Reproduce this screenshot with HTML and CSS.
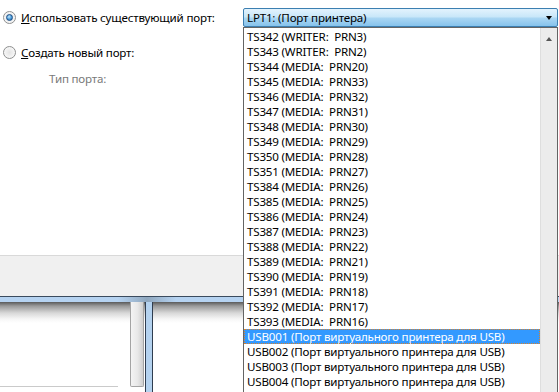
FILE: index.html
```html
<!DOCTYPE html>
<html lang="ru">
<head>
  <meta charset="utf-8"/>
  <link rel="stylesheet" href="styles.css">
  <title>Порт принтера</title>
</head>
<body>
  <div class="screen">
    <div class="dialog">
      <div class="port-row">
        <label class="radio-option">
          <span class="radio checked"></span>
          <span><u>И</u>спользовать существующий порт:</span>
        </label>
        <div class="combo">
          <span class="combo-text">LPT1: (Порт принтера)</span>
          <span class="combo-arrow"></span>
        </div>
      </div>
      <div class="port-row second">
        <label class="radio-option">
          <span class="radio"></span>
          <span><u>С</u>оздать новый порт:</span>
        </label>
      </div>
      <div class="port-type">Тип порта:</div>
    </div>

    <div class="button-bar"></div>

    <!-- window behind the dialog -->
    <div class="backdrop">
      <div class="backdrop-frame"></div>
      <div class="backdrop-body">
        <div class="nav-pane"><div class="nav-list"></div></div>
        <div class="nav-scroll"></div>
        <div class="splitter"></div>
        <div class="content-pane"></div>
      </div>
    </div>

    <!-- open combo list, drawn over everything -->
    <div class="dropdown">
      <ul class="port-list">
        <li>TS342 (WRITER:  PRN3)</li>
        <li>TS343 (WRITER:  PRN2)</li>
        <li>TS344 (MEDIA:  PRN20)</li>
        <li>TS345 (MEDIA:  PRN33)</li>
        <li>TS346 (MEDIA:  PRN32)</li>
        <li>TS347 (MEDIA:  PRN31)</li>
        <li>TS348 (MEDIA:  PRN30)</li>
        <li>TS349 (MEDIA:  PRN29)</li>
        <li>TS350 (MEDIA:  PRN28)</li>
        <li>TS351 (MEDIA:  PRN27)</li>
        <li>TS384 (MEDIA:  PRN26)</li>
        <li>TS385 (MEDIA:  PRN25)</li>
        <li>TS386 (MEDIA:  PRN24)</li>
        <li>TS387 (MEDIA:  PRN23)</li>
        <li>TS388 (MEDIA:  PRN22)</li>
        <li>TS389 (MEDIA:  PRN21)</li>
        <li>TS390 (MEDIA:  PRN19)</li>
        <li>TS391 (MEDIA:  PRN18)</li>
        <li>TS392 (MEDIA:  PRN17)</li>
        <li>TS393 (MEDIA:  PRN16)</li>
        <li class="selected">USB001 (Порт виртуального принтера для USB)</li>
        <li>USB002 (Порт виртуального принтера для USB)</li>
        <li>USB003 (Порт виртуального принтера для USB)</li>
        <li>USB004 (Порт виртуального принтера для USB)</li>
      </ul>
      <div class="scrollbar">
        <span class="scroll-up"></span>
      </div>
    </div>
  </div>
</body>
</html>
```

FILE: styles.css
```css
body {
  margin: 0;
  font-family: "Noto Sans", "Open Sans", sans-serif;
  font-size: 11.6px;
  letter-spacing: -0.2px;
  line-height: 15px;
  color: #000;
  background: #fff;
}

.screen {
  position: relative;
  width: 559px;
  height: 392px;
  overflow: hidden;
  display: flex;
  flex-direction: column;
}

/* dialog part */
.dialog {
  height: 255px;
  flex: 0 0 auto;
  box-sizing: border-box;
  padding: 8px 0 0 3px;
  background: #fff;
}

.port-row {
  display: flex;
  align-items: center;
  height: 19px;
}

.port-row.second {
  margin-top: 16px;
}

.radio-option {
  display: flex;
  align-items: center;
  gap: 5px;
  width: 240px;
}

.radio {
  width: 13px;
  height: 13px;
  box-sizing: border-box;
  border: 1px solid #8e8f8f;
  border-radius: 50%;
  background: radial-gradient(circle at 50% 50%, #e4e4e4 0, #f4f4f4 60%, #fdfdfd 100%);
  display: flex;
  align-items: center;
  justify-content: center;
}

.radio.checked::after {
  content: "";
  width: 7px;
  height: 7px;
  box-sizing: border-box;
  border: 1px solid #1d4f86;
  border-radius: 50%;
  background: radial-gradient(circle at 40% 35%, #c4e6fb 0, #4a9ad8 55%, #1e5ea2 100%);
}

.port-type {
  margin-top: 9px;
  padding-left: 46px;
  color: #7a7a7a;
}

.combo {
  width: 315px;
  height: 19px;
  box-sizing: border-box;
  border: 1px solid #3c7fb1;
  border-radius: 2px;
  padding: 0 3px;
  display: flex;
  align-items: center;
  justify-content: space-between;
  background: linear-gradient(#e3f3fd, #c9e7f9 45%, #a9d6f3 55%, #86c3ec);
}

.combo-arrow {
  width: 0;
  height: 0;
  margin-right: 2px;
  border-left: 3.5px solid transparent;
  border-right: 3.5px solid transparent;
  border-top: 4px solid #000;
}

.button-bar {
  height: 41px;
  flex: 0 0 auto;
  box-sizing: border-box;
  border-top: 1px solid #d9d9d9;
  background: #f0f0f0;
}

/* explorer window behind */
.backdrop {
  flex: 1 1 auto;
  display: flex;
  flex-direction: column;
  border-top: 1px solid #3b4b5e;
}

.backdrop-frame {
  height: 5px;
  background: linear-gradient(to right, #b6d3f1 0, #b6d3f1 118px, #8fa7be 147px, #b6d3f1 176px, #b6d3f1 100%);
}

.backdrop-body {
  flex: 1 1 auto;
  display: flex;
  background: linear-gradient(#5a5a5a, #9a9a9a 4px, #d8d8d8 11px, #f6f6f6 17px, #fff 21px);
}

.nav-pane {
  width: 130px;
}

.nav-list {
  height: 84px;
  margin-right: 12px;
  border-bottom: 1px solid #cacaca;
}

.nav-scroll {
  width: 14px;
  height: 85px;
  margin-right: 1px;
  box-sizing: border-box;
  border: 1px solid #a4a4a4;
  border-top: none;
  border-radius: 0 0 2px 2px;
  background: linear-gradient(to right, #f4f4f4, #e8e8e8 55%, #cfcfcf);
}

.splitter {
  width: 8px;
  box-sizing: border-box;
  border-left: 1px solid #2f3d4f;
  border-right: 1px solid #2f3d4f;
  background: #b4d2ef;
}

.content-pane {
  flex: 1 1 auto;
}

/* dropdown list */
.dropdown {
  position: absolute;
  left: 243px;
  top: 27px;
  width: 315px;
  height: 380px;
  box-sizing: border-box;
  border: 1px solid #646464;
  background: #fff;
  display: flex;
}

.port-list {
  list-style: none;
  margin: 0;
  padding: 1px 0 0;
  flex: 1 1 auto;
}

.port-list li {
  height: 15px;
  padding-left: 3px;
  white-space: pre;
}

.port-list .selected {
  background: #3399ff;
  color: #fff;
  outline: 1px dotted #d9822b;
  outline-offset: -1px;
}

.scrollbar {
  width: 17px;
  flex: 0 0 auto;
  box-sizing: border-box;
  border-left: 1px solid #dedede;
  background: #ececec;
  display: flex;
  justify-content: center;
  padding-top: 9px;
}

.scroll-up {
  width: 0;
  height: 0;
  border-left: 3.5px solid transparent;
  border-right: 3.5px solid transparent;
  border-bottom: 4px solid #555;
}
```
